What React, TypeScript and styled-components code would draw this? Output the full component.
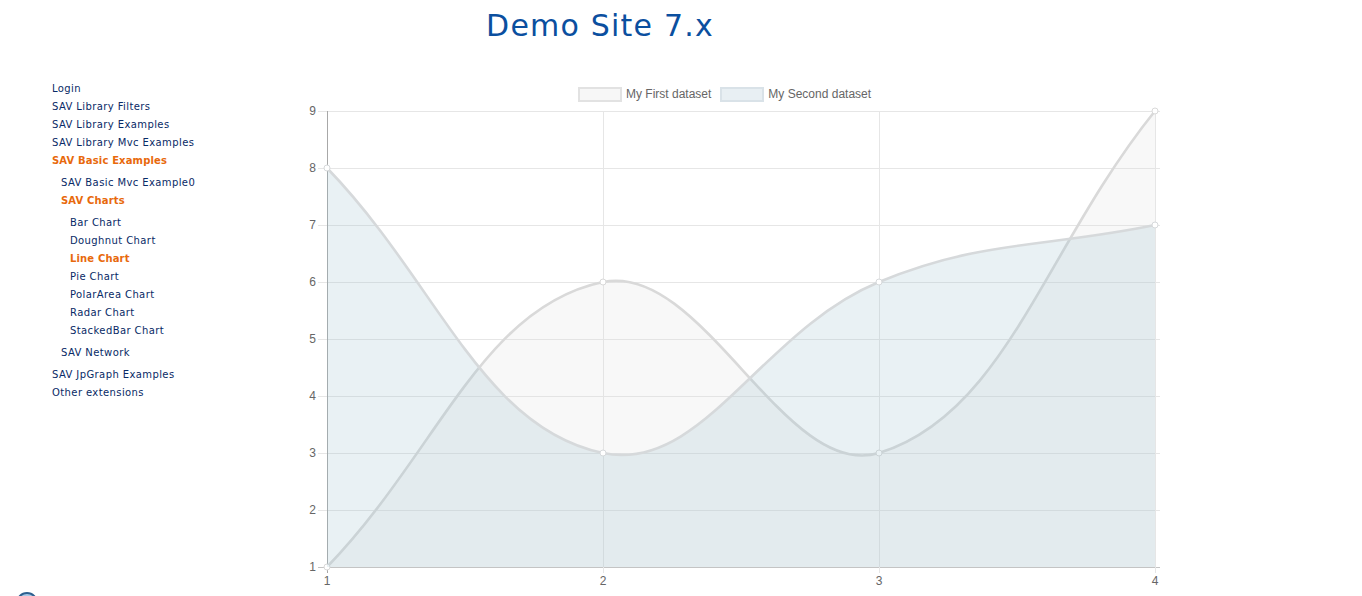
import React from "react";
import styled, { createGlobalStyle } from "styled-components";

const GlobalStyle = createGlobalStyle`
  html, body { margin: 0; padding: 0; background: #ffffff; }
  body { font-family: "DejaVu Sans", Verdana, sans-serif; overflow: hidden; }
`;

const Page = styled.div`
  width: 1362px;
  height: 596px;
  overflow: hidden;
`;

const Header = styled.header`
  width: 1200px;
  padding-top: 8px;
  text-align: center;
`;

const Title = styled.h1`
  margin: 0;
  font-family: "DejaVu Sans", Verdana, sans-serif;
  font-weight: normal;
  font-size: 30px;
  line-height: 36px;
  letter-spacing: 1.2px;
  color: #0b4f9f;
`;

const Main = styled.div`
  display: flex;
  margin-top: 35px;
`;

const Sidebar = styled.nav`
  width: 280px;
  flex: none;
  box-sizing: border-box;
  padding: 1px 0 0 52px;
`;

const MenuList = styled.ul<{ $nested?: boolean }>`
  list-style: none;
  margin: ${(p) => (p.$nested ? "4px 0" : "0")};
  padding: 0 0 0 ${(p) => (p.$nested ? "9px" : "0")};
`;

const MenuItem = styled.li`
  margin: 0;
  padding: 0;
`;

const MenuLink = styled.a<{ $active?: boolean }>`
  display: block;
  height: 18px;
  line-height: 18px;
  font-size: 10px;
  white-space: nowrap;
  text-decoration: none;
  font-family: "DejaVu Sans", Verdana, sans-serif;
  font-weight: ${(p) => (p.$active ? "bold" : "normal")};
  color: ${(p) => (p.$active ? "#e8690c" : "#082a66")};
  letter-spacing: ${(p) => (p.$active ? "0.15px" : "0.4px")};
`;

const Content = styled.section`
  width: 900px;
  flex: none;
  display: flex;
  flex-direction: column;
`;

const Legend = styled.div`
  display: flex;
  align-items: center;
  height: 30px;
  padding-left: 298px;
  gap: 9px;
`;

const LegendItem = styled.div`
  display: flex;
  align-items: center;
  gap: 4px;
`;

const Swatch = styled.span<{ $fill: string; $border: string }>`
  display: block;
  width: 44px;
  height: 15px;
  box-sizing: border-box;
  border: 2px solid ${(p) => p.$border};
  background: ${(p) => p.$fill};
`;

const LegendLabel = styled.span`
  font-family: "Liberation Sans", Arial, sans-serif;
  font-size: 12px;
  color: #666666;
  white-space: nowrap;
`;

const ChartSvg = styled.svg`
  display: block;
  overflow: visible;
  font-family: "Liberation Sans", Arial, sans-serif;
`;

const Footer = styled.footer`
  padding: 3px 0 0 16px;
`;

const FooterLogo = styled.div`
  width: 22px;
  height: 22px;
  border-radius: 50%;
  box-sizing: border-box;
  border: 2px solid #2d5f8f;
  background: #a9c9e6;
`;

type Pt = { x: number; y: number };

const W = 900;
const H = 480;
const L = 47;
const R = 875;
const T = 2;
const B = 458;
const labels = ["1", "2", "3", "4"];
const step = (R - L) / (labels.length - 1);
const yOf = (v: number) => B - ((v - 1) * (B - T)) / 8;

const clampY = (y: number) => Math.min(B, Math.max(T, y));

function buildPath(data: number[]) {
  const pts: Pt[] = data.map((v, i) => ({ x: L + i * step, y: yOf(v) }));
  const t = 0.4;
  const ctrl = pts.map((p1, i) => {
    const p0 = pts[i - 1] || p1;
    const p2 = pts[i + 1] || p1;
    const d01 = Math.hypot(p1.x - p0.x, p1.y - p0.y);
    const d12 = Math.hypot(p2.x - p1.x, p2.y - p1.y);
    const fa = (t * d01) / (d01 + d12);
    const fb = (t * d12) / (d01 + d12);
    return {
      inner: { x: p1.x - fa * (p2.x - p0.x), y: clampY(p1.y - fa * (p2.y - p0.y)) },
      outer: { x: p1.x + fb * (p2.x - p0.x), y: clampY(p1.y + fb * (p2.y - p0.y)) },
    };
  });
  let d = `M ${pts[0].x} ${pts[0].y}`;
  for (let i = 1; i < pts.length; i++) {
    const a = ctrl[i - 1].outer;
    const b = ctrl[i].inner;
    d += ` C ${a.x} ${a.y} ${b.x} ${b.y} ${pts[i].x} ${pts[i].y}`;
  }
  const fill = `${d} L ${pts[pts.length - 1].x} ${B} L ${pts[0].x} ${B} Z`;
  return { pts, d, fill };
}

const datasets = [
  { label: "My First dataset", data: [1, 6, 3, 9], fill: "rgba(220,220,220,0.2)", stroke: "#d9d9d9", swatchFill: "#f7f7f7", swatchBorder: "#e2e2e2" },
  { label: "My Second dataset", data: [8, 3, 6, 7], fill: "rgba(151,187,205,0.21)", stroke: "#d6d9db", swatchFill: "#e8eff3", swatchBorder: "#d9e2e8" },
];

const gridColor = "#e6e6e6";
const axisColor = "#c4c4c4";

function LineChart() {
  const rows = [1, 2, 3, 4, 5, 6, 7, 8, 9];
  return (
    <ChartSvg width={W} height={H} viewBox={`0 0 ${W} ${H}`}>
      {rows.map((v) => (
        <g key={`y${v}`}>
          <line
            x1={L - 9}
            x2={R + 5}
            y1={yOf(v) + 0.5}
            y2={yOf(v) + 0.5}
            stroke={v === 1 ? axisColor : gridColor}
            strokeWidth={1}
          />
          <text x={L - 11} y={yOf(v) + 4} textAnchor="end" fontSize={12} fill="#666">
            {v}
          </text>
        </g>
      ))}
      {labels.map((lab, i) => {
        const x = L + i * step;
        return (
          <g key={`x${lab}`}>
            <line
              x1={x + 0.5}
              x2={x + 0.5}
              y1={T}
              y2={B + 6}
              stroke={i === 0 ? "#a8a8a8" : gridColor}
              strokeWidth={1}
            />
            <text x={x} y={B + 18} textAnchor="middle" fontSize={12} fill="#666">
              {lab}
            </text>
          </g>
        );
      })}
      {datasets.map((ds) => {
        const { pts, d, fill } = buildPath(ds.data);
        return (
          <g key={ds.label}>
            <path d={fill} fill={ds.fill} stroke="none" />
            <path d={d} fill="none" stroke={ds.stroke} strokeWidth={2.6} />
            {pts.map((p, i) => (
              <circle key={i} cx={p.x} cy={p.y} r={3} fill="#fff" stroke={ds.stroke} strokeWidth={1} />
            ))}
          </g>
        );
      })}
    </ChartSvg>
  );
}

type Node = { label: string; active?: boolean; children?: Node[] };

const menu: Node[] = [
  { label: "Login" },
  { label: "SAV Library Filters" },
  { label: "SAV Library Examples" },
  { label: "SAV Library Mvc Examples" },
  {
    label: "SAV Basic Examples",
    active: true,
    children: [
      { label: "SAV Basic Mvc Example0" },
      {
        label: "SAV Charts",
        active: true,
        children: [
          { label: "Bar Chart" },
          { label: "Doughnut Chart" },
          { label: "Line Chart", active: true },
          { label: "Pie Chart" },
          { label: "PolarArea Chart" },
          { label: "Radar Chart" },
          { label: "StackedBar Chart" },
        ],
      },
      { label: "SAV Network" },
    ],
  },
  { label: "SAV JpGraph Examples" },
  { label: "Other extensions" },
];

function Menu({ items, nested }: { items: Node[]; nested?: boolean }) {
  return (
    <MenuList $nested={nested}>
      {items.map((n) => (
        <MenuItem key={n.label}>
          <MenuLink href="#" $active={n.active}>
            {n.label}
          </MenuLink>
          {n.children && <Menu items={n.children} nested />}
        </MenuItem>
      ))}
    </MenuList>
  );
}

export default function App() {
  return (
    <Page>
      <GlobalStyle />
      <Header>
        <Title>Demo Site 7.x</Title>
      </Header>
      <Main>
        <Sidebar>
          <Menu items={menu} />
        </Sidebar>
        <Content>
          <Legend>
            {datasets.map((ds) => (
              <LegendItem key={ds.label}>
                <Swatch $fill={ds.swatchFill} $border={ds.swatchBorder} />
                <LegendLabel>{ds.label}</LegendLabel>
              </LegendItem>
            ))}
          </Legend>
          <LineChart />
        </Content>
      </Main>
      <Footer>
        <FooterLogo />
      </Footer>
    </Page>
  );
}
